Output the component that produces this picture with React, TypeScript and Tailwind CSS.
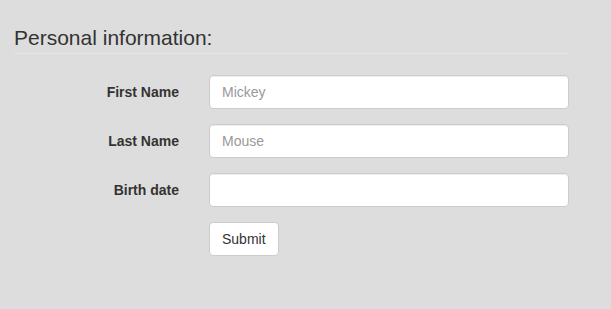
import React from 'react';

const fields = [
  { label: 'First Name', placeholder: 'Mickey' },
  { label: 'Last Name', placeholder: 'Mouse' },
  { label: 'Birth date', placeholder: '' },
];

export default function App() {
  return (
    <div className="min-h-screen bg-[#dddddd] pl-[14px] pt-[23px] text-[#333333] font-['Liberation_Sans',Arial,sans-serif]">
      <form className="w-[555px]">
        {/* Legend */}
        <h2 className="h-[31px] border-b border-[#e5e5e5] text-[21px] leading-[30px] font-normal">
          Personal information:
        </h2>

        <div className="mt-[21px] flex flex-col gap-[15px]">
          {fields.map((f) => (
            <div key={f.label} className="flex items-center gap-[30px]">
              <label className="w-[165px] text-right text-[14px] font-bold leading-[20px]">{f.label}</label>
              <input
                type="text"
                placeholder={f.placeholder}
                className="h-[34px] w-[360px] rounded-[4px] border border-[#cccccc] bg-white px-[12px] text-[14px] text-[#555555] placeholder:text-[#999999] shadow-[inset_0_1px_1px_rgba(0,0,0,0.075)] outline-none"
              />
            </div>
          ))}

          <div className="flex gap-[30px]">
            <div className="w-[165px]" />
            <button
              type="button"
              className="h-[34px] rounded-[4px] border border-[#cccccc] bg-white px-[12px] text-[14px] leading-[20px] text-[#333333]"
            >
              Submit
            </button>
          </div>
        </div>
      </form>
    </div>
  );
}
